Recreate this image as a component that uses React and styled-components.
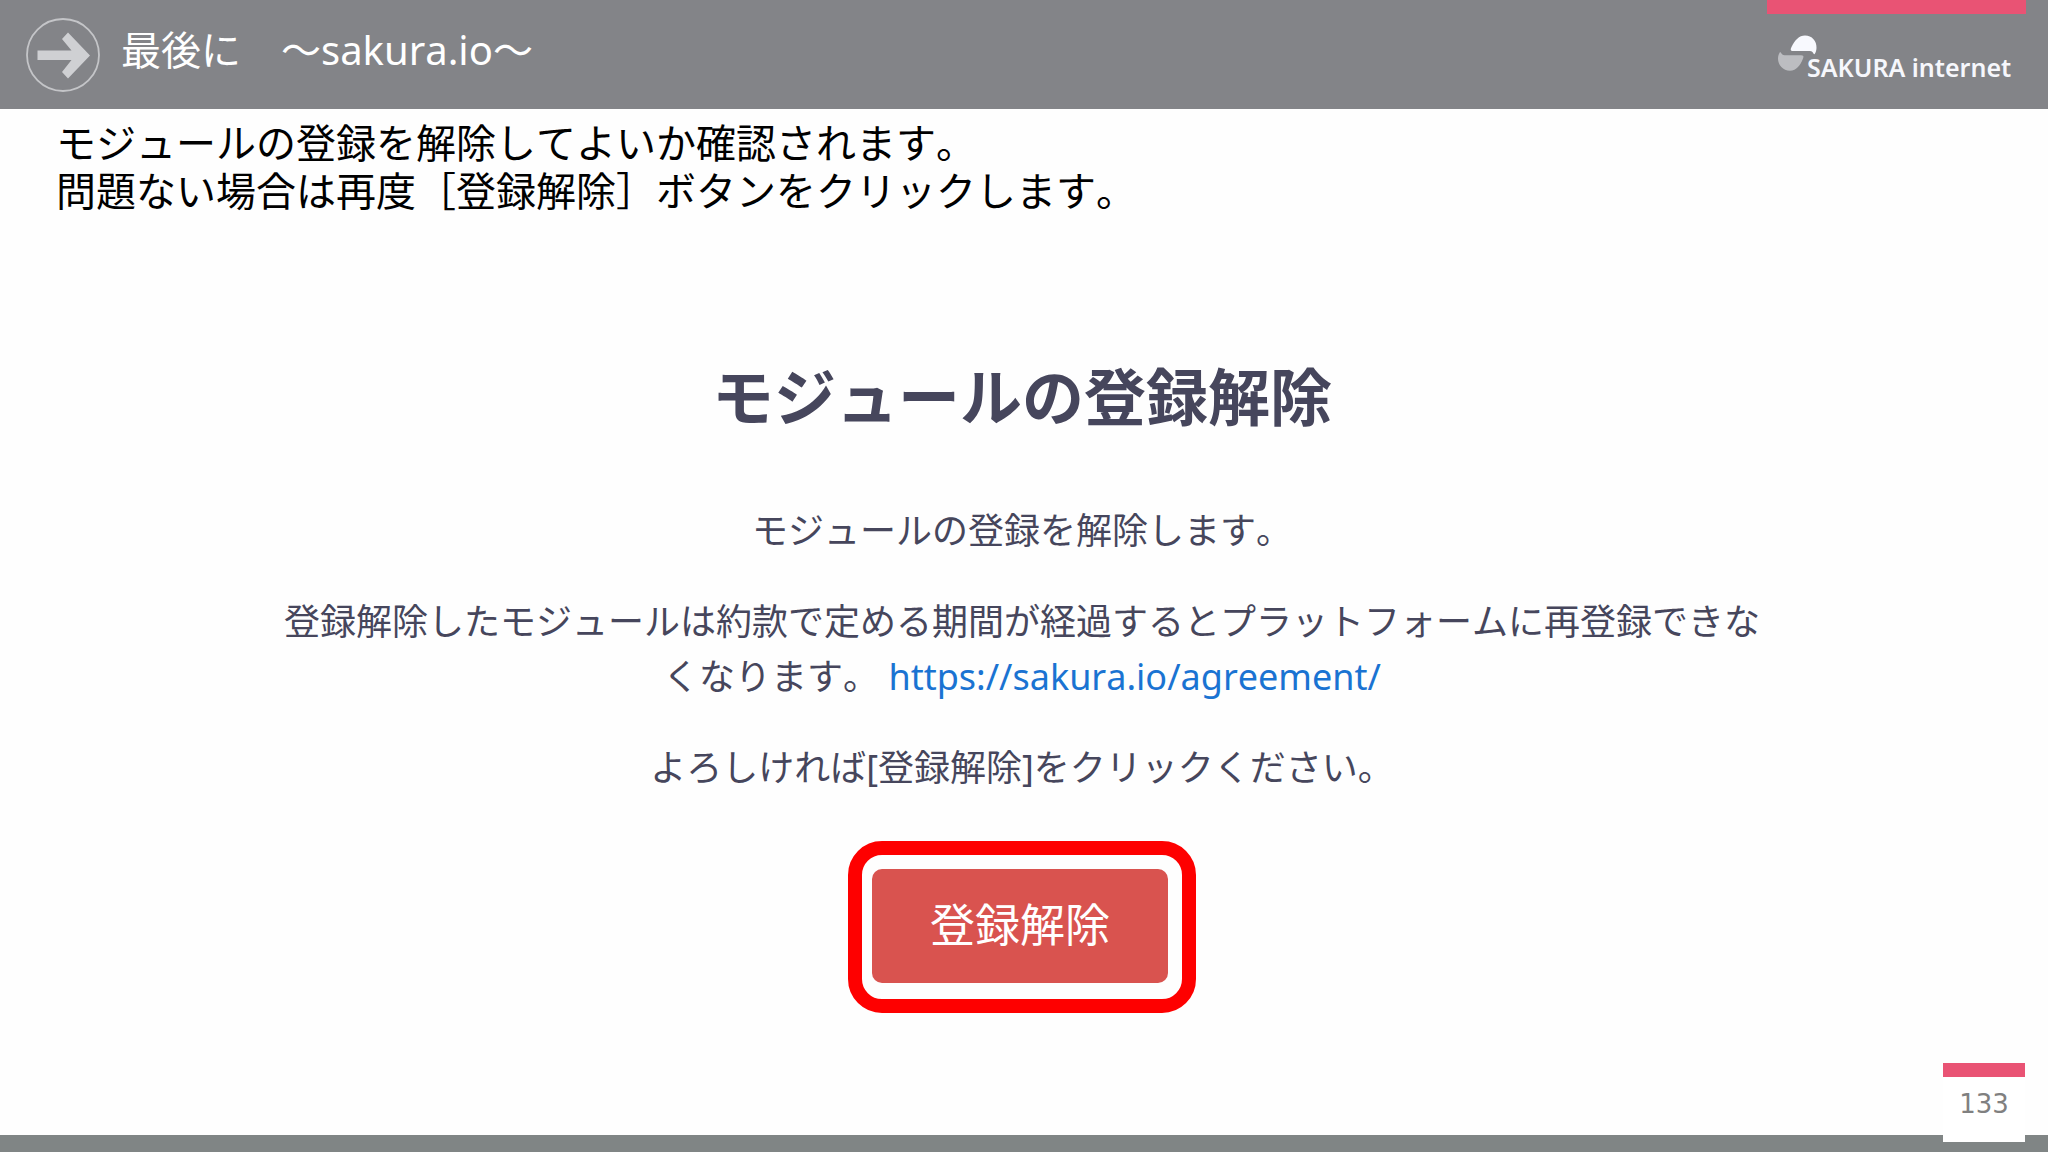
import React from 'react';
import styled, { createGlobalStyle } from 'styled-components';

const GlobalStyle = createGlobalStyle`
  * {
    box-sizing: border-box;
  }

  body {
    margin: 0;
    background: #fefefe;
    font-family: 'Noto Sans', 'Noto Sans CJK JP', sans-serif;
    font-kerning: none; // keeps kana on the full-width grid
  }
`;

const Slide = styled.div`
  display: flex;
  flex-direction: column;
  min-height: 100vh;
`;

const Header = styled.header`
  display: flex;
  justify-content: space-between;
  height: 109px;
  padding: 0 22px 0 26px;
  background: #838488;
`;

const TitleGroup = styled.div`
  display: flex;
  align-items: center;
  gap: 21px;
`;

const ArrowIcon = styled.svg`
  width: 74px;
  height: 74px;
`;

const Title = styled.h1`
  margin: 0;
  padding-bottom: 10px;
  color: #fff;
  font-size: 40px;
  font-weight: 400;
  line-height: 48px;
`;

const Brand = styled.div`
  display: flex;
  flex-direction: column;
  width: 259px;
`;

// pink accent used above the logo and above the page number
const Accent = styled.div`
  height: 14px;
  background: #e95374;
`;

const Logo = styled.div`
  display: flex;
  padding: 20px 0 0 10px;
`;

const LogoMark = styled.svg`
  width: 42px;
  height: 38px;
`;

const LogoText = styled.span`
  margin: 17px 0 0 -12px;
  color: #f6f7fc;
  font-family: 'Noto Sans', sans-serif;
  font-size: 25px;
  font-weight: 600;
  line-height: 32px;
  white-space: nowrap;
`;

const Instructions = styled.p`
  margin: 0;
  padding: 10px 56px 0;
  color: #000;
  font-size: 40px;
  line-height: 48px;
`;

const Dialog = styled.main`
  display: flex;
  flex: 1;
  flex-direction: column;
  align-items: center;
  padding: 142px 4px 116px 0;
  color: #46465c;
  text-align: center;
`;

const DialogTitle = styled.h2`
  margin: 0 0 66px;
  font-size: 62px;
  font-weight: 700;
  line-height: 80px;
`;

const Message = styled.p`
  max-width: 1500px;
  margin: 0 0 36px;
  font-size: 36px;
  line-height: 55px;
`;

const Link = styled.a`
  color: #1a73d2;
  text-decoration: none;
`;

const Highlight = styled.div`
  margin-top: 10px;
  padding: 14px 14px 16px 10px;
  border: 14px solid #fe0000;
  border-radius: 34px;
`;

const DangerButton = styled.button`
  display: block;
  width: 296px;
  height: 114px;
  padding: 0 0 8px;
  border: none;
  border-radius: 10px;
  background: #d9534f;
  color: #fff;
  font-family: inherit;
  font-size: 45px;
  cursor: pointer;
`;

const Footer = styled.footer`
  position: relative;
  height: 17px;
  background: #808585;
`;

const PageTab = styled.div`
  position: absolute;
  right: 23px;
  bottom: 10px;
  width: 82px;
  height: 79px;
  background: #fff;
`;

const PageNumber = styled.div`
  color: #808080;
  font-family: 'DejaVu Sans', sans-serif;
  font-size: 26px;
  line-height: 54px;
  text-align: center;
`;

const App = () => {
  return (
    <Slide>
      <GlobalStyle />
      <Header>
        <TitleGroup>
          <ArrowIcon viewBox="0 0 74 74" fill="none" aria-hidden="true">
            <circle cx="37" cy="37" r="36" stroke="#c4c5c8" strokeWidth="1.8" />
            <path
              d="M11.5 32.500h34L36 21l6-6.500L64 37.500 42 60.500l-6-6.500L45.500 42h-34z"
              fill="#cfd0d3"
            />
          </ArrowIcon>
          <Title>最後に　～sakura.io～</Title>
        </TitleGroup>
        <Brand>
          <Accent />
          <Logo>
            <LogoMark viewBox="0 0 42 38" aria-hidden="true">
              <path
                d="M14.500 13C18 6 22 1.500 28 1.500c7 0 11.800 5.500 11.500 12.500-.1 2.500-.8 4.500-2 6.300-1.500-.3-1.300-3.300-4.500-3.300H16c-2.500 0-2.800-1.500-1.500-4z"
                fill="#f8f9fe"
              />
              <path
                d="M3 18c1.500.5 1.500 3.200 4.500 3.200H24c2.500 0 3 1 2 3.300C23.500 31 19.500 36.800 13 36.800 6 36.800 1 31 1 24.500c0-2.500.8-4.500 2-6.500z"
                fill="#bcbdc1"
              />
            </LogoMark>
            <LogoText>SAKURA internet</LogoText>
          </Logo>
        </Brand>
      </Header>
      <Instructions>
        モジュールの登録を解除してよいか確認されます。
        <br />
        問題ない場合は再度［登録解除］ボタンをクリックします。
      </Instructions>
      <Dialog>
        <DialogTitle>モジュールの登録解除</DialogTitle>
        <Message>モジュールの登録を解除します。</Message>
        <Message>
          登録解除したモジュールは約款で定める期間が経過するとプラットフォームに再登録できなくなります。{' '}
          <Link href="https://sakura.io/agreement/">https://sakura.io/agreement/</Link>
        </Message>
        <Message>よろしければ[登録解除]をクリックください。</Message>
        <Highlight>
          <DangerButton type="button">登録解除</DangerButton>
        </Highlight>
      </Dialog>
      <Footer>
        <PageTab>
          <Accent />
          <PageNumber>133</PageNumber>
        </PageTab>
      </Footer>
    </Slide>
  );
};

export default App;
